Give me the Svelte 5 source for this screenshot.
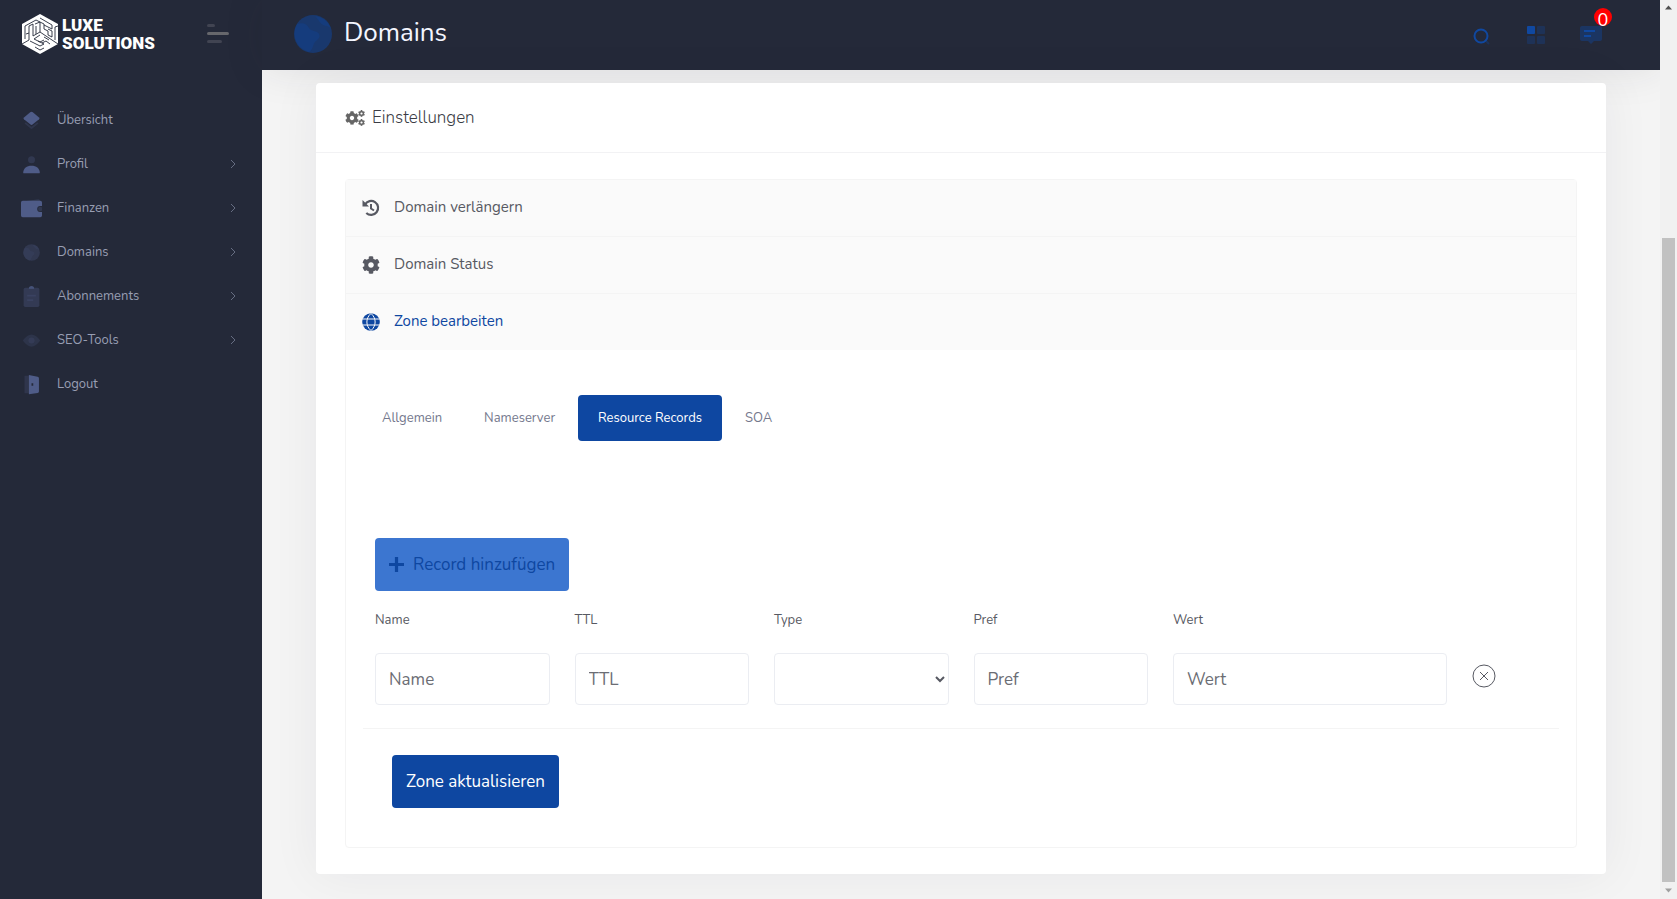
<script lang="ts">
  type NavItem = { label: string; icon: string; sub?: boolean };

  const nav: NavItem[] = [
    { label: 'Übersicht', icon: 'layers' },
    { label: 'Profil', icon: 'user', sub: true },
    { label: 'Finanzen', icon: 'wallet', sub: true },
    { label: 'Domains', icon: 'earth', sub: true },
    { label: 'Abonnements', icon: 'clipboard', sub: true },
    { label: 'SEO-Tools', icon: 'eye', sub: true },
    { label: 'Logout', icon: 'door' }
  ];

  const tabs = ['Allgemein', 'Nameserver', 'Resource Records', 'SOA'];
  let activeTab = $state('Resource Records');

  const gear =
    'M487.4 315.7l-42.6-24.6c4.3-23.2 4.3-47 0-70.2l42.6-24.6c4.9-2.8 7.1-8.6 5.5-14-11.1-35.6-30-67.8-54.7-94.6-3.8-4.1-10-5.1-14.8-2.3L380.8 110c-17.9-15.4-38.5-27.3-60.8-35.1V25.8c0-5.6-3.9-10.5-9.4-11.7-36.7-8.2-74.3-7.8-109.2 0-5.5 1.2-9.4 6.1-9.4 11.7V75c-22.2 7.9-42.8 19.8-60.8 35.1L88.7 85.5c-4.9-2.8-11-1.9-14.8 2.3-24.7 26.7-43.6 58.9-54.7 94.6-1.7 5.4.6 11.2 5.5 14L67.300 221c-4.3 23.2-4.3 47 0 70.200l-42.600 24.600c-4.900 2.800-7.100 8.600-5.500 14 11.100 35.600 30 67.800 54.700 94.600 3.800 4.100 10 5.100 14.800 2.300l42.600-24.600c17.900 15.400 38.500 27.300 60.800 35.100v49.200c0 5.600 3.900 10.500 9.400 11.700 36.700 8.200 74.300 7.800 109.200 0 5.500-1.200 9.400-6.100 9.400-11.700v-49.200c22.200-7.900 42.800-19.800 60.800-35.100l42.600 24.600c4.900 2.800 11 1.900 14.800-2.300 24.700-26.700 43.600-58.900 54.700-94.600 1.500-5.500-.7-11.300-5.600-14.100zM256 336c-44.100 0-80-35.900-80-80s35.900-80 80-80 80 35.900 80 80-35.900 80-80 80z';
</script>

{#snippet globe()}
  <circle cx="12" cy="12" r="9.5" opacity="0.5" />
  <path d="M4 7c3-1 5 0 6 2s4 1 5 3-1 3-2 4-1 4-3 5A9.5 9.5 0 0 1 4 7zM13 3c2 2 3 5 6 5l2 1a9.5 9.5 0 0 0-8-6z" opacity="0.3" />
{/snippet}

{#snippet navIcon(name: string)}
  <svg class="nav-icon" viewBox="0 0 24 24" aria-hidden="true">
    {#if name === 'layers'}
      <path d="M4 15.500l1.500-1.500L12 19l6.500-5 1.500 1.500-7 5.700q-1 .8-2 0z" opacity="0.25" />
      <path d="M10.500 2.600L3.400 8.500q-1.200 1 0 2l7.100 5.900q1.500 1.200 3 0l7.100-5.900q1.200-1 0-2l-7.100-5.900q-1.500-1.200-3 0z" />
    {:else if name === 'user'}
      <circle cx="12" cy="6.500" r="4" opacity="0.3" />
      <path d="M2.500 21c.3-4.500 4-7.500 9.500-7.500s9.200 3 9.500 7.500q0 1-1 1h-17q-1 0-1-1z" />
    {:else if name === 'wallet'}
      <path d="M6 3.500l14-2q2 0 2 3v2H4z" opacity="0.3" />
      <path d="M2 3h20q2 0 2 2v4h-2a3 3 0 0 0 0 7h2v4q0 2-2 2H2q-2 0-2-2V5q0-2 2-2z" />
      <circle cx="22" cy="12.500" r="2.500" opacity="0.3" />
    {:else if name === 'earth'}
      <g opacity="0.6">{@render globe()}</g>
    {:else if name === 'clipboard'}
      <rect x="3" y="2" width="18" height="22" rx="2" opacity="0.35" />
      <path d="M7 10h10v2H7zm0 5h7v2H7z" opacity="0.25" />
      <path d="M9 3q0-3 3-3t3 3z" opacity="0.8" />
    {:else if name === 'eye'}
      <path d="M2 12q10-14 20 0-10 14-20 0z" opacity="0.22" />
      <circle cx="12" cy="12" r="3.500" opacity="0.2" />
    {:else}
      <path d="M4 2h5v20H4z" opacity="0.25" />
      <path fill-rule="evenodd" d="M9 1l10 2q1.500.3 1.500 2v15q0 1.500-1.500 1.700L9 23zM12 10.500v3h2v-3z" />
    {/if}
  </svg>
{/snippet}

<div class="app">
  <aside class="sidebar">
    <div class="brand">
      <a class="logo" href="/" aria-label="Luxe Solutions">
        <svg class="cube" viewBox="0 0 36 40" aria-hidden="true">
          <path d="M18 0l18 10v20L18 40 0 30V10z" fill="#fff" />
          <g fill="none" stroke="#242939" stroke-width="0.900">
            <path d="M0 30l7-4V12l4-2v12l7-4 18 12M18 18V8l-5 2" />
            <path d="M3 25V12l11-6 8 4v5M4 20l3-1M14 20v-8M18 4l12 7v4l-8-4M36 12l-3 1v13M22 15l4 2v4l4 2V17l-4-2" />
            <path d="M18 21l-6 4 6 3 4-2M8 27l10 5 4-2-6-3M27 26l-5-3M28 30l-4-3-4 2M13 33l5 3 4-2" />
          </g>
        </svg>
        <span>LUXE<br />SOLUTIONS</span>
      </a>
      <button class="burger" type="button" aria-label="Menü"><i></i><i></i><i></i></button>
    </div>
    <nav>
      {#each nav as item}
        <a href={`#${item.icon}`}>
          {@render navIcon(item.icon)}
          <span>{item.label}</span>
          {#if item.sub}
            <svg class="chevron" viewBox="0 0 6 10" aria-hidden="true"><path d="M1 1l4 4-4 4" /></svg>
          {/if}
        </a>
      {/each}
    </nav>
  </aside>

  <div class="content">
    <header class="topbar">
      <svg class="title-icon" viewBox="2 2 20 20" aria-hidden="true">{@render globe()}</svg>
      <h1>Domains</h1>
      <div class="tools">
        <button type="button" aria-label="Suche">
          <svg viewBox="0 0 24 24">
            <path d="M16 17l4 4" stroke="#0e47a1" stroke-width="2" opacity="0.3" />
            <circle cx="12" cy="13" r="6.500" fill="none" stroke="#1048a0" stroke-width="2" />
          </svg>
        </button>
        <button type="button" aria-label="Apps">
          <svg viewBox="0 0 24 24">
            <rect x="3" y="3" width="8" height="8" rx="1" />
            <path d="M13 4q0-1 1-1h6q1 0 1 1v6q0 1-1 1h-6q-1 0-1-1zM3 14q0-1 1-1h6q1 0 1 1v6q0 1-1 1H4q-1 0-1-1zM13 14q0-1 1-1h6q1 0 1 1v6q0 1-1 1h-6q-1 0-1-1z" opacity="0.3" />
          </svg>
        </button>
        <button type="button" aria-label="Nachrichten">
          <svg viewBox="0 0 24 24">
            <path d="M3 3h18q2 0 2 2v11q0 2-2 2h-6l-3 3-3-3H3q-2 0-2-2V5q0-2 2-2z" opacity="0.4" />
            <path d="M5 7h11v2H5zm0 5h7v2H5z" />
          </svg>
          <span class="badge">0</span>
        </button>
      </div>
    </header>

    <main>
      <section class="card">
        <h2>
          <svg viewBox="0 0 20 16" aria-hidden="true">
            <g transform="translate(0 1) scale(0.0273)"><path d={gear} /></g>
            <g transform="translate(13 0) scale(0.0137)"><path d={gear} /></g>
            <g transform="translate(13 9) scale(0.0137)"><path d={gear} /></g>
          </svg>
          Einstellungen
        </h2>
        <div class="card-body">
          <div class="accordion">
            <button class="item" type="button">
              <svg viewBox="0 0 18 18" aria-hidden="true">
                <path d="M3 5.500A7 7 0 1 1 4.300 14" fill="none" stroke="currentColor" stroke-width="2.200" />
                <path d="M.5 1v6.500H7z" />
                <path d="M9 5v4.500l3 2" fill="none" stroke="currentColor" stroke-width="2" />
              </svg>
              <span>Domain verlängern</span>
            </button>
            <button class="item" type="button">
              <svg viewBox="0 0 512 512" aria-hidden="true"><path d={gear} /></svg>
              <span>Domain Status</span>
            </button>
            <button class="item open" type="button" aria-expanded="true">
              <svg viewBox="0 0 18 18" aria-hidden="true">
                <circle cx="9" cy="9" r="8.800" />
                <path d="M0 6h18M0 12h18M9 .5C3.500 5 3.500 13 9 17.500M9 .5c5.500 4.500 5.500 12.500 0 17" fill="none" stroke="#fafafa" />
              </svg>
              <span>Zone bearbeiten</span>
            </button>

            <div class="panel">
              <div class="tabs" role="tablist">
                {#each tabs as tab}
                  <button
                    type="button"
                    role="tab"
                    aria-selected={activeTab === tab}
                    class:active={activeTab === tab}
                    onclick={() => (activeTab = tab)}>{tab}</button>
                {/each}
              </div>

              <form>
                <button class="btn add" type="button">
                  <svg viewBox="0 0 14 14" aria-hidden="true"><path d="M5.500 0h3v5.500H14v3H8.500V14h-3V8.500H0v-3h5.500z" /></svg>
                  Record hinzufügen
                </button>
                <div class="records">
                  <div class="field">
                    <label for="rr-name">Name</label>
                    <input id="rr-name" type="text" placeholder="Name" />
                  </div>
                  <div class="field">
                    <label for="rr-ttl">TTL</label>
                    <input id="rr-ttl" type="text" placeholder="TTL" />
                  </div>
                  <div class="field">
                    <label for="rr-type">Type</label>
                    <select id="rr-type"><option value=""></option></select>
                  </div>
                  <div class="field">
                    <label for="rr-pref">Pref</label>
                    <input id="rr-pref" type="text" placeholder="Pref" />
                  </div>
                  <div class="field wide">
                    <label for="rr-value">Wert</label>
                    <input id="rr-value" type="text" placeholder="Wert" />
                  </div>
                  <button class="remove" type="button" aria-label="Record entfernen">
                    <svg viewBox="0 0 24 24"><circle cx="12" cy="12" r="11" /><path d="M8 8l8 8M16 8l-8 8" /></svg>
                  </button>
                </div>
                <hr />
                <button class="btn submit" type="submit">Zone aktualisieren</button>
              </form>
            </div>
          </div>
        </div>
      </section>
    </main>
  </div>

  <div class="scrollbar" aria-hidden="true">
    <svg viewBox="0 0 17 17"><path class="up" d="M5 9.500h7L8.500 5.500z" /></svg>
    <div class="thumb"></div>
    <svg viewBox="0 0 17 17"><path class="down" d="M5 6.500h7l-3.500 4z" /></svg>
  </div>
</div>

<style>
  :global(body) {
    margin: 0;
    background: #f4f4f4;
    color: #575962;
    font-family: Nunito, 'Noto Sans', sans-serif;
    font-size: 17px;
  }

  .app {
    display: flex;
    min-height: 100vh;
  }

  button,
  input,
  select {
    font: inherit;
    color: inherit;
    box-sizing: border-box;
  }

  button {
    border: 0;
    padding: 0;
    background: none;
    cursor: pointer;
  }

  svg {
    flex: none;
    fill: currentColor;
  }

  .sidebar {
    flex: 0 0 262px;
    background: #242939;
  }

  .brand {
    display: flex;
    align-items: center;
    justify-content: space-between;
    height: 67px;
    padding: 0 33px 0 22px;
  }

  .logo {
    display: flex;
    align-items: center;
    gap: 4px;
    color: #fff;
    text-decoration: none;
    font: 900 17px/18px Roboto, sans-serif;
  }

  .cube {
    width: 36px;
    height: 40px;
  }

  .burger {
    display: grid;
    gap: 5px;
  }

  .burger i {
    width: 8px;
    height: 3px;
    border-radius: 2px;
    background: #414452;
  }

  .burger i:nth-child(2) {
    width: 22px;
    background: #66676c;
  }

  .burger i:nth-child(3) {
    width: 15px;
  }

  nav {
    padding-top: 31px;
  }

  nav a {
    display: flex;
    align-items: center;
    gap: 15px;
    height: 44px;
    padding: 0 26px 0 21px;
    color: #989eb3;
    font-size: 13px;
    text-decoration: none;
  }

  .nav-icon {
    width: 21px;
    height: 21px;
    color: #4f5c88;
  }

  .chevron {
    width: 6px;
    height: 10px;
    margin-left: auto;
    fill: none;
    stroke: #666d82;
  }

  .content {
    flex: 1;
    min-width: 0;
  }

  .topbar {
    display: flex;
    align-items: center;
    height: 70px;
    padding: 0 57px 0 31px;
    background: #242939;
    box-shadow: 0 0 40px rgba(40, 40, 50, 0.1);
  }

  .title-icon {
    width: 40px;
    height: 40px;
    margin-bottom: 2px;
    color: #0e47a1;
  }

  h1 {
    margin: 0 auto 6px 11px;
    color: #f4f6ff;
    font-size: 26px;
    font-weight: 400;
  }

  .tools {
    display: flex;
    gap: 31px;
    color: #1048a0;
  }

  .tools button {
    position: relative;
    height: 24px;
  }

  .tools svg {
    width: 24px;
    height: 24px;
  }

  .badge {
    position: absolute;
    top: -15px;
    right: -9px;
    width: 18px;
    height: 18px;
    border-radius: 9px;
    background: #f00;
    color: #fff;
    font-size: 18px;
    line-height: 24px;
  }

  main {
    padding: 13px 54px 25px;
  }

  .card {
    border-radius: 4px;
    background: #fff;
    box-shadow: 0 0 50px rgba(40, 40, 50, 0.06);
  }

  h2 {
    display: flex;
    align-items: center;
    gap: 7px;
    height: 69px;
    margin: 0;
    padding: 0 29px;
    border-bottom: 1px solid #f2f2f4;
    color: #3a3c44;
    font-size: 17px;
    font-weight: 300;
  }

  h2 svg {
    width: 20px;
    height: 16px;
    color: #666;
  }

  .card-body {
    padding: 26px 29px;
  }

  .accordion {
    border: 1px solid #f4f4f4;
    border-radius: 4px;
  }

  .item {
    display: flex;
    align-items: center;
    gap: 14px;
    width: 100%;
    height: 57px;
    padding: 0 16px;
    border-bottom: 1px solid #f4f4f4;
    background: #fafafa;
    font-size: 15px;
  }

  .item span {
    padding-bottom: 2px;
  }

  .item svg {
    width: 18px;
    height: 18px;
  }

  .open {
    height: 56px;
    border-bottom: 0;
    color: #0e47a1;
  }

  .panel {
    padding: 45px 17px 39px;
  }

  .tabs {
    display: flex;
    gap: 4px;
  }

  .tabs button {
    height: 46px;
    padding: 0 19px;
    border-radius: 4px;
    color: #74788d;
    font-size: 13px;
  }

  .tabs .active {
    padding: 0 20px;
    background: #0e47a1;
    color: #fff;
  }

  form {
    padding-top: 97px;
  }

  .btn {
    display: flex;
    align-items: center;
    gap: 9px;
    height: 53px;
    padding: 0 14px;
    border-radius: 4px;
    background: #0e47a1;
    color: #fff;
  }

  .add {
    margin-left: 12px;
    background: #3c76d0;
    color: #0e47a1;
  }

  .add svg {
    width: 15px;
    height: 15px;
  }

  .submit {
    margin-left: 29px;
  }

  .records {
    display: grid;
    grid-template-columns: repeat(12, 1fr);
    gap: 25px;
    padding: 19px 12px 23px;
  }

  .field {
    grid-column: span 2;
    display: grid;
    gap: 23px;
    min-width: 0;
  }

  .wide {
    grid-column: span 3;
  }

  label {
    font-size: 13px;
    line-height: 20px;
  }

  input,
  select {
    width: 100%;
    height: 52px;
    border: 1px solid #ebedf2;
    border-radius: 4px;
    background: #fff;
  }

  input {
    padding: 0 13px;
  }

  input::placeholder {
    color: #6b6d74;
    opacity: 1;
  }

  .remove {
    align-self: end;
    justify-self: start;
    height: 24px;
    margin-bottom: 17px;
  }

  .remove svg {
    width: 24px;
    height: 24px;
    fill: none;
    stroke: #575962;
  }

  hr {
    margin: 0 0 26px;
    border: 0;
    border-top: 1px solid #f4f4f4;
  }

  .scrollbar {
    display: flex;
    flex-direction: column;
    flex: 0 0 17px;
    background: #f1f1f1;
  }

  .scrollbar svg {
    width: 17px;
    height: 17px;
  }

  .up {
    fill: #505050;
  }

  .down {
    fill: #a0a0a0;
  }

  .thumb {
    flex: 1;
    margin: 221px 2px 0;
    background: #c1c1c1;
  }
</style>
